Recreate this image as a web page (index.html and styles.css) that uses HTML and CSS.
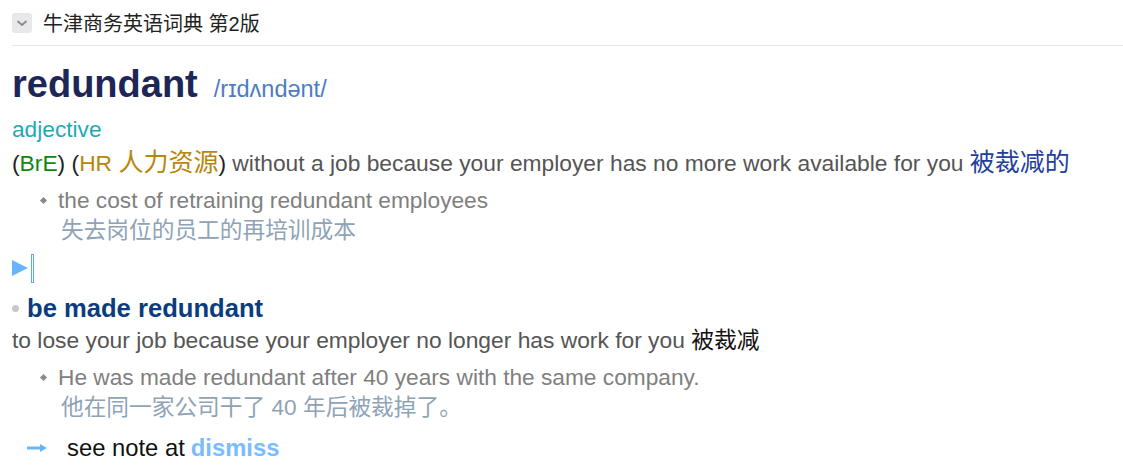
FILE: index.html
```html
<!DOCTYPE html>
<html lang="zh">
<head>
<meta charset="utf-8">
<link rel="stylesheet" href="styles.css">
</head>
<body>
<div class="page">
  <div class="header">
    <span class="toggle"><svg width="20" height="20" viewBox="0 0 20 20"><path d="M6 8.5 L10 12 L14 8.5" fill="none" stroke="#8a8a8e" stroke-width="1.8" stroke-linecap="round" stroke-linejoin="round"/></svg></span>
    <span class="dict-title">牛津商务英语词典 第2版</span>
  </div>

  <div class="headword-row">
    <span class="headword">redundant</span>
    <span class="phon">/rɪdʌndənt/</span>
  </div>
  <div class="pos">adjective</div>
  <div class="def"><span class="paren">(</span><span class="reg">BrE</span><span class="paren">)</span> <span class="paren">(</span><span class="subj">HR <span class="zh-big">人力资源</span></span><span class="paren">)</span> without a job because your employer has no more work available for you <span class="def-zh zh-big">被裁减的</span></div>

  <div class="example">
    <span class="diamond"></span>
    <div class="ex-body">
      <div class="ex-en">the cost of retraining redundant employees</div>
      <div class="ex-zh">失去岗位的员工的再培训成本</div>
    </div>
  </div>

  <div class="audio">
    <svg width="24" height="32" viewBox="0 0 24 32"><path d="M0 8 L16 16 L0 24 Z" fill="#69b4ff"/><rect x="19.5" y="2.5" width="2" height="28" fill="none" stroke="#5aa8ff" stroke-width="1"/></svg>
  </div>

  <div class="phrase"><span class="dot"></span><span class="phrase-text">be made redundant</span></div>
  <div class="def">to lose your job because your employer no longer has work for you <span class="def-zh2">被裁减</span></div>

  <div class="example">
    <span class="diamond"></span>
    <div class="ex-body">
      <div class="ex-en">He was made redundant after 40 years with the same company.</div>
      <div class="ex-zh">他在同一家公司干了 40 年后被裁掉了。</div>
    </div>
  </div>

  <div class="xref">
    <svg class="arrow" width="20" height="10" viewBox="0 0 20 10"><path d="M0 5 H15" stroke="#6ab4ff" stroke-width="3"/><path d="M13 1 L20 5 L13 9 Z" fill="#6ab4ff"/></svg>
    <span class="see">see note at</span> <span class="xref-word">dismiss</span>
  </div>
</div>
</body>
</html>
```

FILE: styles.css
```css
html, body {
  margin: 0;
  padding: 0;
  background: #ffffff;
}
body {
  font-family: "Liberation Sans", Arial, "Noto Sans CJK SC", sans-serif;
  color: #555555;
}
.page {
  padding: 0 0 0 12px;
}
.header {
  display: flex;
  align-items: center;
  height: 45px;
  border-bottom: 1px solid #e6e6e6;
}
.toggle {
  width: 20px;
  height: 20px;
  background: #e8e8ea;
  border-radius: 3px;
  display: flex;
  flex-shrink: 0;
}
.dict-title {
  margin-left: 11px;
  font-size: 20px;
  color: #222222;
  font-family: "Liberation Sans", "Noto Sans CJK SC", sans-serif;
}
.headword-row {
  margin-top: 16px;
  line-height: 44px;
  height: 44px;
  display: flex;
  align-items: baseline;
}
.headword {
  font-size: 38px;
  font-weight: bold;
  color: #1e2656;
}
.phon {
  margin-left: 16px;
  font-size: 23.5px;
  color: #4d7cc1;
  font-family: "Liberation Sans", "DejaVu Sans", sans-serif;
}
.pos {
  margin-top: 6px;
  font-size: 22.7px;
  line-height: 34px;
  color: #1eaab4;
}
.def {
  font-size: 22.8px;
  line-height: 32px;
  color: #555555;
}
.zh-big { font-size: 25px; }
.paren { color: #222222; }
.reg { color: #118811; }
.subj { color: #b8860b; }
.def-zh { color: #233f9c; }
.def-zh2 { color: #111111; }
.example {
  display: flex;
  align-items: flex-start;
  margin-top: 6px;
  padding-left: 29px;
}
.diamond {
  width: 5px;
  height: 5px;
  background: #8a8a8a;
  transform: rotate(45deg);
  margin-top: 13px;
  flex-shrink: 0;
}
.ex-body {
  margin-left: 12px;
}
.ex-en {
  font-size: 22.7px;
  line-height: 30px;
  color: #808080;
}
.ex-zh {
  font-size: 22.7px;
  line-height: 30px;
  color: #8ea3b6;
  padding-left: 3px;
}
.audio {
  margin-top: 6px;
  height: 34px;
  display: flex;
  align-items: center;
}
.phrase {
  margin-top: 7px;
  display: flex;
  align-items: center;
  line-height: 32px;
}
.dot {
  width: 7px;
  height: 7px;
  border-radius: 50%;
  background: #c8c8c8;
  margin-right: 8px;
}
.phrase-text {
  font-size: 25.6px;
  font-weight: bold;
  color: #0b3d7e;
}
.xref {
  margin-top: 10px;
  padding-left: 15px;
  display: flex;
  align-items: center;
  line-height: 32px;
  font-size: 23.8px;
}
.arrow {
  margin-right: 20px;
}
.see {
  color: #111111;
  margin-right: 6px;
}
.xref-word {
  color: #7bbcff;
  font-weight: bold;
}
```
